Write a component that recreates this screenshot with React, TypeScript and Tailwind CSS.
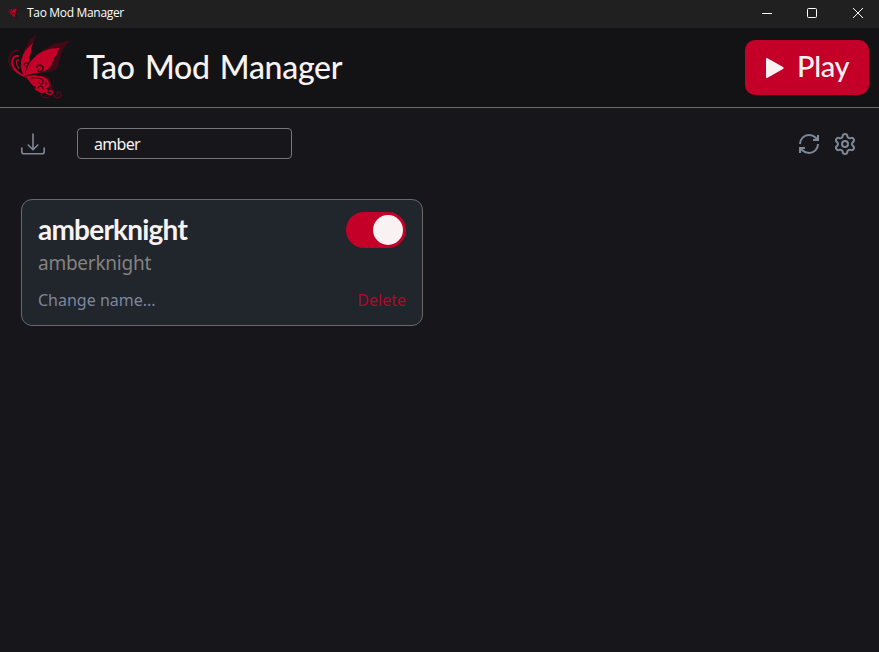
import React from "react";
import { RefreshCw, Settings } from "lucide-react";

function Butterfly({ className, viewBox = "0 0 80 75" }: { className: string; viewBox?: string }) {
  return (
    <svg viewBox={viewBox} className={className}>
      <g fill="#420917">
        <path d="M23 28C24 17 29 9 37 4C33 11 34 15 30 24L27 38Z" />
        <path d="M28 42C34 23 49 12 71 11C66 14 64 18 61 24C61 29 58 30 59 35C57 41 50 43 37 43Z" />
        <path d="M38 46C46 44 52 48 51 54C54 57 52 59 54 61L46 61Z" />
      </g>
      <g fill="none" stroke="#520a1a" strokeLinecap="round">
        <path d="M19 21C13 18 7 28 10 35C12 40 17 43 22 45" strokeWidth="1.5" />
        <path d="M53 61C52 70 62 69 61 64C60 61 56 62 57 65" strokeWidth="1.4" />
        <path d="M41 65C43 68 47 68 50 67" strokeWidth="1.2" />
      </g>
      <g fill="#c40028">
        <path d="M24 46C19 36 19 24 33 13C30 20 32 23 29 28C30 33 25 38 25 46Z" />
        <path d="M25 46C28 31 38 18 60 18C56 22 59 25 54 27C55 30 52 31 52 34C49 40 43 42 38 43C33 44 29 44 25 46Z" />
        <path d="M25 47C31 45 36 45 39 46C44 46 49 49 49 53C50 56 48 58 46 58C48 60 48 63 45 62C43 65 39 62 38 61C34 61 35 58 36 57C31 56 30 50 25 47Z" />
      </g>
      <g fill="none" stroke="#c40028" strokeLinecap="round">
        <path d="M18 26C13 25 10 32 14 38C16 42 20 44 24 46" strokeWidth="1.9" />
        <path d="M19 30C16 29 15 34 19 38" strokeWidth="1.3" />
        <path d="M45 61C47 66 54 65 52 61C51 60 49 61 50 62" strokeWidth="1.4" />
      </g>
      <g fill="none" stroke="#300811" strokeLinecap="round">
        <path d="M37 37C38 34 43 35 43 38C43 42 38 43 38 40" strokeWidth="1.6" />
        <path d="M24 35C25 32 28 32 28 35C28 37 26 37 26 36" strokeWidth="1.1" />
        <path d="M31 48C36 47 42 48 43 51C44 55 39 55 39 52" strokeWidth="1.1" />
        <path d="M38 58C39 55 44 56 43 59M46 52V55" strokeWidth="1.1" />
      </g>
    </svg>
  );
}

function TitleBar() {
  return (
    <div className="flex h-7 shrink-0 items-center bg-[#202020]">
      <Butterfly className="mb-1 ml-[7px] h-3 w-3" viewBox="6 2 62 68" />
      <span className="ml-2 pb-0.5 font-['Open_Sans',sans-serif] text-[12px] leading-4 tracking-[-0.32px] text-white">Tao Mod Manager</span>
      <div className="mr-[15px] mb-[3px] ml-auto flex items-center gap-[35px] text-white">
        <svg className="h-[11px] w-[11px]" viewBox="0 0 11 11"><path d="M1 6.5H11" stroke="currentColor" /></svg>
        <svg className="h-[11px] w-[11px]" viewBox="0 0 11 11"><rect x=".5" y="1.5" width="9" height="9" rx="1" fill="none" stroke="currentColor" /></svg>
        <svg className="h-[11px] w-[11px]" viewBox="0 0 11 11"><path d="M0 1L10 11M10 1L0 11" stroke="currentColor" /></svg>
      </div>
    </div>
  );
}

export default function App() {
  return (
    <div className="flex h-[652px] w-[879px] flex-col overflow-hidden bg-[#17161b] font-['Noto_Sans',sans-serif]">
      <TitleBar />
      <header className="flex h-20 shrink-0 items-center border-b border-[#69696c] bg-[#131315] pr-2.5">
        <Butterfly className="h-[75px] w-20" />
        <h1 className="ml-[6px] pb-px font-['Lato',sans-serif] text-[32px] leading-10 font-medium tracking-[-0.3px] whitespace-nowrap text-[#f8f2f2] [word-spacing:2.5px]">Tao Mod Manager</h1>
        <button className="ml-auto flex h-[55px] w-[124px] items-center rounded-[10px] bg-[#c40028] pl-5 text-[#f8f2f2]">
          <svg className="h-[22px] w-5" viewBox="0 0 20 22"><path d="M1 2Q1 .5 2.5 1.3L18 10Q19.5 11 18 12L2.5 20.7Q1 21.5 1 20Z" fill="currentColor" /></svg>
          <span className="ml-3 pb-1 font-['Lato',sans-serif] text-[29px] leading-9 font-medium tracking-[-0.3px]">Play</span>
        </button>
      </header>
      <div className="mt-5 flex h-[31px] shrink-0 items-center pr-[22px] pl-5 text-[#7e8998]">
        <svg className="h-6 w-[26px]" viewBox="0 0 26 24" fill="none" stroke="currentColor" strokeWidth="1.6" strokeLinecap="round" strokeLinejoin="round">
          <path d="M13 2V17.5M8.2 13L13 17.8L17.8 13M1.8 16V19.7Q1.8 21.7 3.8 21.7H22.2Q24.2 21.7 24.2 19.7V16" />
        </svg>
        <input defaultValue="amber" className="ml-[31px] h-[31px] w-[215px] rounded-[4px] border border-[#77777b] bg-transparent px-4 text-[16px] tracking-[-0.7px] text-[#f8f2f2] outline-none" />
        <div className="ml-auto flex gap-3">
          <RefreshCw className="h-6 w-6" strokeLinecap="butt" strokeLinejoin="miter" />
          <Settings className="h-6 w-6" />
        </div>
      </div>
      <main className="px-[21px] pt-10">
        <section className="flex h-[127px] w-[402px] flex-col rounded-[11px] border border-[#69696c] bg-[#21252c] px-4 pt-3">
          <div className="flex h-9 items-center justify-between">
            <h2 className="pb-[2px] font-['Lato',sans-serif] text-[28px] leading-9 font-bold tracking-[-0.78px] text-[#f8f2f2]">amberknight</h2>
            <div className="flex h-9 w-[60px] items-center justify-end rounded-full bg-[#c40028] pr-[3px]">
              <div className="h-[30px] w-[30px] rounded-full bg-[#f8f2f2]" />
            </div>
          </div>
          <p className="mt-[1px] text-[19px] leading-7 tracking-[-0.25px] text-[#85827f]">amberknight</p>
          <div className="mt-[11px] flex justify-between text-[16px] leading-6">
            <button className="text-[#7e869c]">Change name...</button>
            <button className="text-[#b6052b]">Delete</button>
          </div>
        </section>
      </main>
    </div>
  );
}
